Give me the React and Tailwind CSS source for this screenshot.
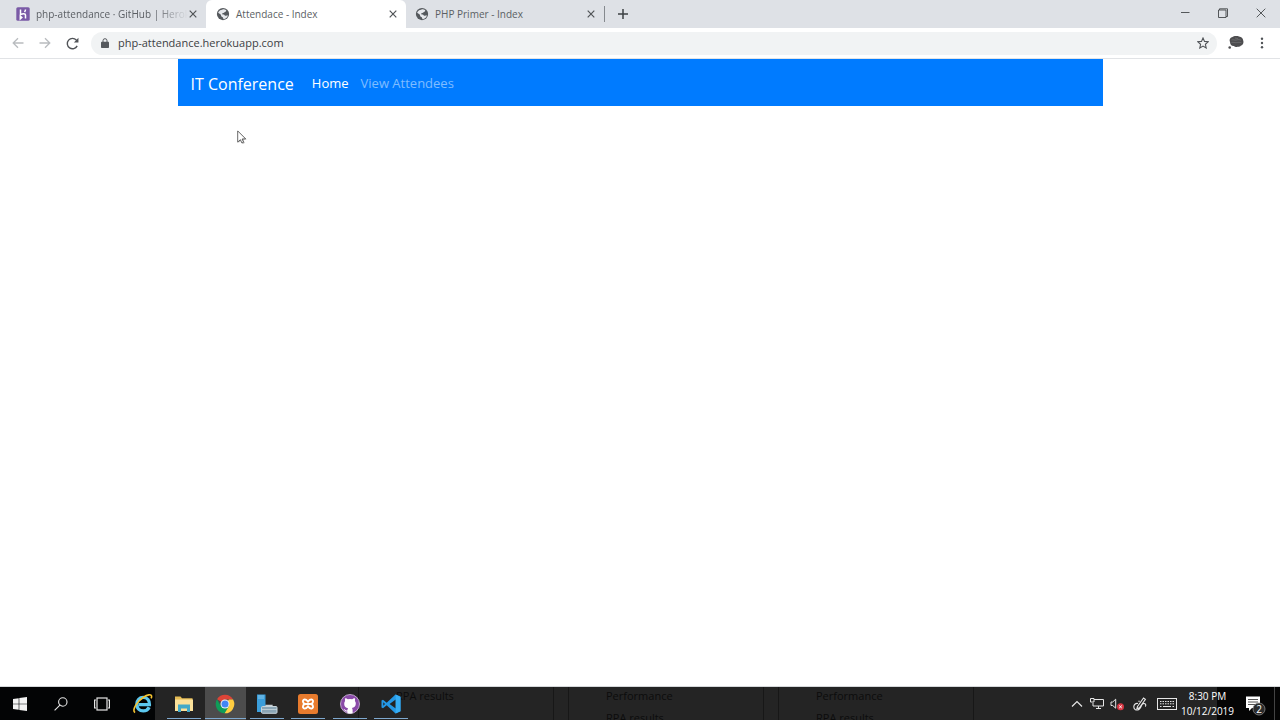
import React from "react";

function Globe() {
  return (
    <svg viewBox="0 0 24 24" className="size-[14px] shrink-0" aria-hidden="true">
      <circle cx="12" cy="12" r="10.5" fill="#55595d" />
      <path d="M10.5 4.5c2-1.5 5-.7 6.600.8.9 1.200.2 2.500-1 2.700-1.600.2-1.200 1.400-2.400 2-1.200.5-2.700.1-3 1.500-.1 1.500 1.300 1.200 2.500 1.300 1.700.2 1.300 2 3 2.100 1.400.1 2.400-.7 4.300-.9-.7 3.700-3.900 6.500-7.500 6.900l-.9-2.200c-.3-1.600-2.300-1.400-3-2.800-.7-1.600-.1-2.700-1.600-3.600L3.600 9.800C4.500 7 7 4.700 10.500 4.500z" fill="#e6e8ec" />
    </svg>
  );
}

function HerokuMark() {
  return (
    <svg viewBox="0 0 14 14" className="size-[14px] shrink-0" aria-hidden="true">
      <rect x="0.300" y="0.300" width="13.400" height="13.400" rx="1.500" fill="#7a5aa6" />
      <path d="M4.500 2.500v5c2-1 5-1.500 5 .6v3.400M4.300 9.200v2.600l1.500-1.300zM9.500 2.500c0 1-.4 1.700-1 2.400" fill="none" stroke="#fff" strokeWidth="1.500" />
    </svg>
  );
}

function Cross() {
  return (
    <svg viewBox="0 0 8 8" className="size-[8px]" fill="none" stroke="currentColor" strokeWidth="1.200" aria-hidden="true">
      <path d="M.7.7l6.600 6.600M7.300.7L.7 7.300" />
    </svg>
  );
}

function Tab({ icon, title, active, className, titleClass = "" }) {
  return (
    <div className={`flex h-full items-center pr-[8px] ${className}`}>
      {icon}
      <button
        type="button"
        role="tab"
        aria-selected={active}
        className={`ml-[6px] min-w-0 flex-1 whitespace-nowrap text-left text-[10px] text-[#5b5f64] ${titleClass}`}
      >
        {title}
      </button>
      <button type="button" aria-label={`Close ${title}`} className="flex size-[10px] shrink-0 items-center justify-center text-[#505357]">
        <Cross />
      </button>
    </div>
  );
}

function TabStrip() {
  return (
    <div className="flex h-7 bg-[#dee1e6]">
      <div className="flex min-w-0" role="tablist">
        <Tab
          icon={<HerokuMark />}
          title="php-attendance · GitHub | Herok"
          active={false}
          className="w-[206px] pl-4"
          titleClass="[mask-image:linear-gradient(to_right,black_118px,transparent_152px)]"
        />
        <Tab icon={<Globe />} title="Attendace - Index" active className="w-[200px] rounded-t-[6px] bg-white pl-[10px]" />
        <Tab icon={<Globe />} title="PHP Primer - Index" active={false} className="w-[198px] pl-[9px]" />
      </div>
      <div className="flex items-center">
        <span className="h-4 w-px bg-[#85898e]" />
        <button type="button" aria-label="New tab" className="flex size-[36px] items-center justify-center">
          <svg viewBox="0 0 10 10" className="size-[10px]" stroke="#3c4043" strokeWidth="1.500" aria-hidden="true">
            <path d="M5 0v10M0 5h10" />
          </svg>
        </button>
      </div>
      <div className="ml-auto flex h-[26px] items-center text-[#44474a]">
        <button type="button" aria-label="Minimize" className="flex w-[38px] justify-center">
          <svg viewBox="0 0 10 10" className="size-[10px]" stroke="currentColor" strokeWidth=".9" aria-hidden="true"><path d="M1 4.500h8.500" /></svg>
        </button>
        <button type="button" aria-label="Restore" className="flex w-[38px] justify-center">
          <svg viewBox="0 0 10 10" className="size-[10px]" fill="none" stroke="currentColor" strokeWidth=".9" aria-hidden="true"><path d="M.5 2h7.500v7.500H.5zM1.500 2V.8h8v7.700H8" /></svg>
        </button>
        <button type="button" aria-label="Close window" className="flex w-[38px] justify-center">
          <svg viewBox="0 0 10 10" className="size-[10px]" stroke="currentColor" strokeWidth=".9" aria-hidden="true"><path d="M.7.7l8.600 8.600M9.300.7L.7 9.300" /></svg>
        </button>
      </div>
    </div>
  );
}

function Toolbar() {
  return (
    <div className="flex h-[31px] items-center border-b border-[#e1e3e6] bg-white px-[12px]">
      <div className="flex gap-[15px] text-[#b9bcbf]">
        <button type="button" aria-label="Back">
          <svg viewBox="0 0 12 12" className="size-[12px]" fill="none" stroke="currentColor" strokeWidth="1.300" aria-hidden="true"><path d="M11.500 6H1.500M6 1.200L1.200 6 6 10.800" /></svg>
        </button>
        <button type="button" aria-label="Forward">
          <svg viewBox="0 0 12 12" className="size-[12px]" fill="none" stroke="currentColor" strokeWidth="1.300" aria-hidden="true"><path d="M.5 6h10M6 1.200L10.800 6 6 10.800" /></svg>
        </button>
        <button type="button" aria-label="Reload" className="text-[#505357]">
          <svg viewBox="0 0 12 12" className="size-[13px]" fill="none" stroke="currentColor" strokeWidth="1.300" aria-hidden="true">
            <path d="M10.300 8.200A4.800 4.800 0 1 1 9.600 2.900L10.500 4" />
            <path d="M11.500.8v4.200H7.300z" fill="currentColor" stroke="none" />
          </svg>
        </button>
      </div>
      <form className="ml-3 flex h-[23px] flex-1 items-center rounded-full bg-[#f1f3f4] pl-[10px] pr-[8px]">
        <svg viewBox="0 0 8 10" className="h-[10px] w-[8px]" aria-hidden="true">
          <path d="M2 4V2.700a2 2 0 0 1 4 0V4" fill="none" stroke="#55595d" />
          <rect y="3.700" width="8" height="6.300" rx=".8" fill="#55595d" />
        </svg>
        <input
          type="text"
          aria-label="Address"
          defaultValue="php-attendance.herokuapp.com"
          className="ml-[9px] min-w-0 flex-1 bg-transparent text-[11px] text-[#3c4043] outline-none"
        />
        <button type="button" aria-label="Bookmark this page">
          <svg viewBox="0 0 12 12" className="size-[12px]" fill="none" stroke="#505357" strokeWidth="1.100" aria-hidden="true">
            <path d="M6 1l1.500 3.400 3.700.4-2.800 2.500.8 3.700L6 9.100 2.800 11l.8-3.700L.8 4.800l3.700-.4z" />
          </svg>
        </button>
      </form>
      <button type="button" aria-label="Profile" className="ml-[11px]">
        <svg viewBox="0 0 16 14" className="h-[14px] w-[16px]" aria-hidden="true">
          <path d="M2 6C.8 3.500 2.500 1.600 4 1.300 6-.3 9-.2 11 .4c2.500.2 4 1.900 4.200 4 .8 2.200-.3 4.500-2.200 5.200-1.300 1.500-2.500 1.300-3.600 1.200-1 .5-2.500.5-3.500-.7C3.400 10.200 2.200 8.500 2 6z" fill="#4d4d4f" />
          <path d="M3.500 4c2-.8 3 .6 5 0s3-.4 4.500.2M3.500 6.500c2-.6 3 .5 5 .1s3-.4 5 .2M7 2c1 .5 2 .2 3 .4" fill="none" stroke="#858587" strokeWidth=".5" />
          <circle cx="1.700" cy="11.500" r="1.300" fill="#4d4d4f" />
        </svg>
      </button>
      <button type="button" aria-label="Browser menu" className="ml-[12px] flex w-[12px] justify-center">
        <svg viewBox="0 0 4 12" className="h-[12px] w-[4px]" fill="#505357" aria-hidden="true">
          <circle cx="2" cy="1.800" r="1.200" /><circle cx="2" cy="6" r="1.200" /><circle cx="2" cy="10.200" r="1.200" />
        </svg>
      </button>
    </div>
  );
}

function SiteNav() {
  return (
    <nav className="mx-auto flex h-[47px] w-full max-w-[925px] items-center bg-[#007bff] px-[13px] pt-[3px]">
      <a href="#home" className="text-[16px] text-white">IT Conference</a>
      <a href="#home" className="ml-[18px] text-[13px] font-medium text-white">Home</a>
      <a href="#attendees" className="ml-3 text-[13px] text-white/50">View Attendees</a>
    </nav>
  );
}

function Cursor() {
  return (
    <svg viewBox="0 0 10 15" className="absolute left-[237px] top-[130px] h-[15px] w-[10px]" aria-hidden="true">
      <path d="M1.500 2v11l2.700-2.400 1.600 3.400 2-1-1.500-3.200 3.400-.2z" fill="#bbb" />
      <path d="M.7.900v11.200l2.700-2.400 1.500 3.300 1.700-.8-1.500-3.200 3.500-.2z" fill="#fff" stroke="#444" strokeWidth=".8" />
    </svg>
  );
}

const icons = {
  start: (
    <svg viewBox="0 0 14 14" className="size-[14px]" fill="#f2f2f2" aria-hidden="true">
      <path d="M0 2l5.700-.8v5.500H0zM6.300 1.100L14 0v6.700H6.300zM0 7.300h5.700v5.500L0 12zM6.300 7.300H14V14l-7.700-1.100z" />
    </svg>
  ),
  search: (
    <svg viewBox="0 0 14 14" className="size-[14px]" fill="none" stroke="#e6e6e6" strokeWidth="1.100" aria-hidden="true">
      <circle cx="8.800" cy="5" r="4.200" /><path d="M5.900 8.200L.6 13.300" />
    </svg>
  ),
  taskView: (
    <svg viewBox="0 0 16 14" className="h-[14px] w-[16px]" fill="none" stroke="#e6e6e6" strokeWidth="1.200" aria-hidden="true">
      <rect x="3" y="1" width="10" height="12" /><path d="M2 3H.6v8H2M14 3h1.400v8H14" />
    </svg>
  ),
  ie: (
    <svg viewBox="0 0 22 22" className="size-[21px]" fill="none" aria-hidden="true">
      <path d="M18 15c-1.200 2.500-3.500 3.800-6.200 3.800-4 0-6.800-2.800-6.800-7s2.800-7.100 6.800-7.100c4.300 0 6.700 3 6.500 7.500H7" stroke="#5cc8ef" strokeWidth="3.400" />
      <path d="M3.300 20.500C-.7 18.500 5 9 12 4.500c4-2.700 8-3.500 8.500-1.500.2.900 0 1.800-.5 2.700" stroke="#f5c431" strokeWidth="1.700" />
    </svg>
  ),
  explorer: (
    <svg viewBox="0 0 20 18" className="h-[18px] w-[20px]" aria-hidden="true">
      <path d="M1 1.500h5.500L8 3.200h10.500V16H1z" fill="#e5bc55" />
      <path d="M1 4.500h18V16H1z" fill="#fbe19a" />
      <path d="M4 9.500h12V17h-3v-3.500H7V17H4z" fill="#42a9c8" />
    </svg>
  ),
  chrome: (
    <svg viewBox="0 0 20 20" className="size-[20px]" aria-hidden="true">
      <path d="M10 10L2 5.200A9.300 9.300 0 0 1 18.100 5.500H10z" fill="#db4437" />
      <path d="M10 10l4-4.500h4.100A9.300 9.300 0 0 1 9.600 19.300z" fill="#ffcd40" />
      <path d="M10 10l4 2.300-4.400 7A9.300 9.300 0 0 1 2 5.200l4 7z" fill="#0f9d58" />
      <circle cx="10" cy="10" r="4.500" fill="#f1f1f1" /><circle cx="10" cy="10" r="3.500" fill="#4285f4" />
    </svg>
  ),
  server: (
    <svg viewBox="0 0 22 20" className="h-[20px] w-[22px]" aria-hidden="true">
      <path d="M1 .5h8.500V18H1z" fill="#3b9edb" /><path d="M2 2h6M2 4h6" stroke="#a6d9f5" strokeWidth=".7" />
      <path d="M10 12.500v-1.200h6v1.200" fill="none" stroke="#c9d0d4" strokeWidth="1.300" />
      <rect x="5.500" y="12.500" width="15.500" height="6.800" rx="1" fill="#8ba5b5" stroke="#c8d5dc" />
      <path d="M5.500 15.500h15.500" stroke="#c8d5dc" strokeWidth=".8" />
    </svg>
  ),
  xampp: (
    <svg viewBox="0 0 20 20" className="size-[20px]" aria-hidden="true">
      <rect width="20" height="20" rx="2.500" fill="#e87b2d" />
      <path d="M7.500 10h5M7.500 10C5 10 3.800 5.800 6.500 5.500c2-.2 2.500 1 3.500 2.200 1-1.200 1.500-2.400 3.500-2.200 2.700.3 1.500 4.500-1 4.500 2.500 0 3.700 4.200 1 4.500-2 .2-2.500-1-3.500-2.200-1 1.200-1.500 2.400-3.500 2.200C3.800 14.200 5 10 7.500 10z" fill="none" stroke="#fff" strokeWidth="1.900" />
    </svg>
  ),
  github: (
    <svg viewBox="0 0 20 20" className="size-[20px]" aria-hidden="true">
      <circle cx="10" cy="10" r="9.500" fill="#8a4aa8" stroke="#d6c1df" strokeWidth=".8" />
      <path d="M5.200 4.300c1 0 2 .5 2.700 1a9 9 0 0 1 4.200 0c.7-.5 1.700-1 2.700-1 .4 1 .3 2 .1 2.600.7.800 1 1.800.9 2.900-.1 2.700-1.700 3.900-3.900 4.200.5.500.7 1.200.7 2v3.200a9 9 0 0 1-5.200 0v-1.700c-2.200.5-2.700-1-3.200-1.700-.3-.4-.6-.6-.8-.8 1.700-.3 1.700 1.500 3 1.400.4 0 .8-.1 1-.2.100-.9.300-1.600.7-2-2.300-.4-3.800-1.600-3.900-4.300 0-1.200.3-2.200.9-3-.2-.7-.3-1.600.100-2.600z" fill="#fff" />
    </svg>
  ),
  code: (
    <svg viewBox="0 0 20 20" className="size-[20px]" aria-hidden="true">
      <path d="M14.500.5L5.700 8.700 2 5.800l-1.500.8v6.800l1.500.8 3.700-2.900 8.800 8.200 5-2.200V2.700zM14.700 5.500v9L8.600 10zM2.300 8.300L4 10l-1.700 1.700z" fill="#2498e6" fillRule="evenodd" />
      <path d="M14.700.5l4.800 2.200v14.600l-4.800 2.200z" fill="#36aef5" />
    </svg>
  ),
};

const launchers = [
  ["Start", "start"],
  ["Search", "search"],
  ["Task View", "taskView"],
  ["Internet Explorer", "ie"],
];

const running = [
  ["File Explorer", "explorer"],
  ["Google Chrome", "chrome"],
  ["Server Manager", "server"],
  ["XAMPP", "xampp"],
  ["GitHub Desktop", "github"],
  ["Visual Studio Code", "code"],
];

function BackgroundCard({ first, second }) {
  return (
    <div className="h-full w-[196px] shrink-0 border-x border-[#171717] pl-[37px]">
      <p className="h-[22px]">{first}</p>
      <p>{second}</p>
    </div>
  );
}

function Taskbar() {
  return (
    <footer className="relative flex h-[33px] overflow-hidden bg-[#242424] text-white">
      <div className="absolute inset-y-0 left-[358px] flex gap-[14px] text-[11px] leading-[18px] text-[#0c0c0c]" aria-hidden="true">
        <BackgroundCard first="RPA results" />
        <BackgroundCard first="Performance" second="RPA results" />
        <BackgroundCard first="Performance" second="RPA results" />
      </div>
      <div className="relative grid w-[163px] grid-cols-4 bg-gradient-to-r from-[#030405] from-95% to-[#242424] to-95%">
        {launchers.map(([name, icon]) => (
          <button key={name} type="button" aria-label={name} className="flex items-center justify-center">{icons[icon]}</button>
        ))}
      </div>
      <div className="relative grid w-[249px] grid-cols-6">
        {running.map(([name, icon]) => (
          <button
            key={name}
            type="button"
            aria-label={name}
            className={`relative flex items-center justify-center after:absolute after:bottom-[1px] after:h-px after:bg-[#7fa9cf] ${icon === "chrome" ? "bg-[#4c4c4c] after:w-full" : "after:w-[34px]"}`}
          >
            {icons[icon]}
          </button>
        ))}
      </div>
      <div className="relative ml-auto flex items-center">
        <button type="button" aria-label="Show hidden icons" className="flex w-5 justify-center">
          <svg viewBox="0 0 12 8" className="h-[8px] w-[12px]" fill="none" stroke="#e6e6e6" strokeWidth="1.200" aria-hidden="true"><path d="M1 6.500L6 1.500l5 5" /></svg>
        </button>
        <button type="button" aria-label="Network" className="flex w-5 justify-center">
          <svg viewBox="0 0 14 12" className="h-[12px] w-[14px]" fill="none" stroke="#e6e6e6" aria-hidden="true"><path d="M4 1.500h9.500v6.500H3V5M8.500 8v2.500M6 10.500h5M.5.500H4v3.500H.5z" /></svg>
        </button>
        <button type="button" aria-label="Volume muted" className="flex w-5 justify-center">
          <svg viewBox="0 0 14 14" className="size-[14px]" aria-hidden="true">
            <path d="M1 5h1.700l3-2.800v9L2.700 8.500H1z" fill="none" stroke="#e6e6e6" />
            <circle cx="10.500" cy="9.800" r="3.500" fill="#d63743" /><path d="M9.200 8.500l2.600 2.600M11.800 8.500l-2.600 2.600" stroke="#fff" />
          </svg>
        </button>
        <button type="button" aria-label="Pen settings" className="flex w-[26px] justify-center">
          <svg viewBox="0 0 14 14" className="size-[14px]" fill="none" stroke="#e6e6e6" strokeWidth="1.100" aria-hidden="true">
            <path d="M4.500 9.500L10.500 1l1.900 1.400-6 8.300-2.500.9zM5 6.500C2.400 6 .8 7.800.8 9.800c0 2.200 1.800 3.500 3.700 3.200 2.500-.4 3.200-2.600 4-4.500.8-1.700 2.300-2.500 3.500-1.700 1 .7 1 2 .2 2.700M6.800 4.200H5.300" />
          </svg>
        </button>
        <button type="button" aria-label="Touch keyboard" className="flex w-7 justify-center">
          <svg viewBox="0 0 20 12" className="h-[12px] w-[20px]" fill="none" stroke="#e6e6e6" aria-hidden="true">
            <rect x=".5" y=".5" width="19" height="11" /><path d="M3 3.500h14M3 5.800h14" strokeDasharray="1.500 1" /><path d="M3 8.500h1.500M6 8.500h8M15.500 8.500H17" />
          </svg>
        </button>
        <button type="button" className="flex h-full w-[53px] flex-col items-center justify-center bg-gradient-to-r from-[#242424] from-67% to-[#050505] to-67% text-[10px] leading-[15px]">
          <span>8:30 PM</span>
          <span>10/12/2019</span>
        </button>
        <button type="button" aria-label="2 notifications" className="flex h-full w-[40px] items-center justify-center bg-[#050505] pl-[3px] pt-1">
          <svg viewBox="0 0 22 22" className="size-[22px]" aria-hidden="true">
            <path d="M1 1.500h14V13H7l-3 3v-3H1z" fill="#fff" /><path d="M3 4.500h10M3 7h10M3 9.500h8" stroke="#555" />
            <circle cx="14" cy="14" r="6" fill="#2b2b2b" stroke="#888" strokeWidth=".8" />
            <text x="14" y="17.500" textAnchor="middle" fontSize="10" fill="#fff">2</text>
          </svg>
        </button>
        <span className="h-full w-[6px] border-l border-[#444] bg-[#050505]" />
      </div>
    </footer>
  );
}

export default function App() {
  return (
    <div className="relative flex min-h-screen flex-col bg-white font-['Open_Sans','Noto_Sans',sans-serif]">
      <header>
        <TabStrip />
        <Toolbar />
      </header>
      <main className="flex-1 border-b border-[#d5d8da]">
        <SiteNav />
      </main>
      <Taskbar />
      <Cursor />
    </div>
  );
}
